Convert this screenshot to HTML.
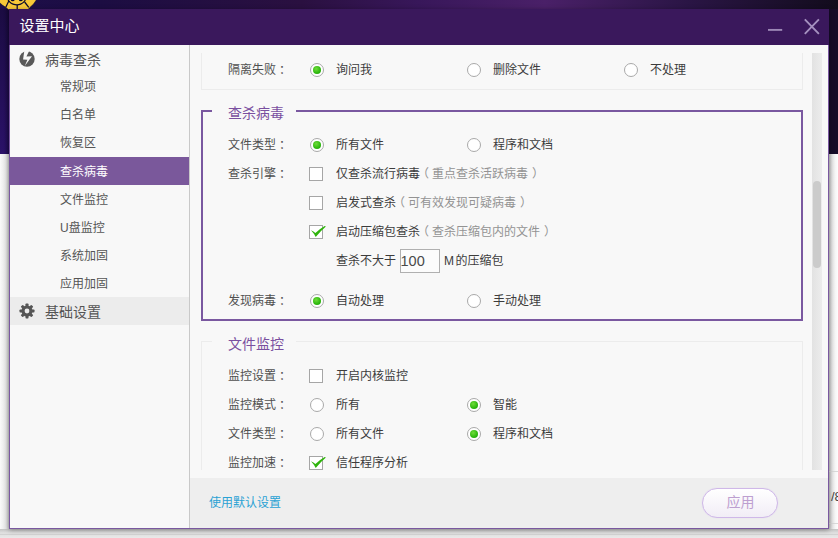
<!DOCTYPE html>
<html lang="zh-CN">
<head>
<meta charset="utf-8">
<title>设置中心</title>
<style>
html,body{margin:0;padding:0;}
body{width:838px;height:538px;overflow:hidden;position:relative;background:#fff;
  font-family:"Liberation Sans","Noto Sans CJK SC",sans-serif;font-size:12px;color:#333;}
.abs{position:absolute;}
#bgtop{left:0;top:0;width:838px;height:10px;
  background:linear-gradient(90deg,#1d0e4a 0%,#1c0d42 12%,#2a1040 36%,#38175a 50%,#4a2068 65%,#2a1545 82%,#120c1c 100%);}
#bgl{left:0;top:9px;width:10px;height:145px;background:linear-gradient(90deg,rgba(0,0,0,0) 40%,rgba(8,0,30,.45) 100%),linear-gradient(180deg,#1b0c42 0%,#2b1268 100%);}
#bgr{left:828px;top:9px;width:10px;height:145px;background:#160c28;}
#bgleft{left:0;top:154px;width:10px;height:384px;background:linear-gradient(90deg,#fafafa 0%,#e4e4e4 60%,#bdbdbd 100%);}
#bgright{left:829px;top:154px;width:9px;height:384px;background:linear-gradient(90deg,#c4c4c4 0%,#e3e3e3 35%,#f6f6f6 70%,#fdfdfd 100%);}
#bgbottom{left:0;top:529px;width:838px;height:9px;background:linear-gradient(180deg,#c4c4c4 0%,#dedede 40%,#e9e9e9 100%);}
#bgbottom i{position:absolute;left:0;top:5px;width:838px;height:1px;background:#d2d2d2;}
#logo{left:0;top:0;}
#win{left:9px;top:9px;width:820px;height:520px;box-sizing:border-box;background:#f8f8f8;
  border:1px solid #7a58a0;border-top:none;box-shadow:0 1px 5px rgba(0,0,0,.35);}
#title{left:9px;top:9px;width:820px;height:36px;background:#3a185c;}
#title span{position:absolute;left:10.5px;top:0;line-height:34px;font-size:15px;color:#fff;}
#side{left:10px;top:45px;width:179px;height:483px;background:#f8f8f8;border-right:1px solid #c9c9c9;}
.s1{position:absolute;left:35px;font-size:14px;line-height:28px;height:28px;color:#555;}
.s2{position:absolute;left:0;width:179px;height:28px;line-height:30px;box-sizing:border-box;padding-left:50px;font-size:12px;color:#555;}
.s2.sel{background:#7a589b;color:#fff;}
#footer{left:190px;top:478px;width:638px;height:50px;background:#eeeeee;}
#footer a{position:absolute;left:19px;top:0;line-height:51px;color:#2aa2d4;text-decoration:none;}
#apply{left:702px;top:488px;width:76px;height:30px;box-sizing:border-box;border:1px solid #cfb8e8;border-radius:15px;box-shadow:0 0 1px #d9c8ee;
  background:linear-gradient(180deg,#ffffff 0%,#f1edf6 100%);color:#bd9fd0;font-size:14px;text-align:center;line-height:27px;text-indent:1px;}
#view{left:190px;top:53px;width:638px;height:417px;overflow:hidden;}
#inner{position:absolute;left:0;top:-8px;width:638px;height:600px;}
.fs{position:absolute;box-sizing:border-box;}
.fs.light{border:1px solid #ececec;}
.fs.purple{border:2px solid #7a58a0;}
.lg{position:absolute;background:#f8f8f8;color:#7a4fa0;font-size:14px;line-height:20px;padding:0 12px 0 16px;}
.lb{position:absolute;left:38px;line-height:20px;height:20px;white-space:nowrap;color:#505050;}
.lb i{font-style:normal;position:relative;left:3px;}
.tx{position:absolute;line-height:20px;height:20px;white-space:nowrap;color:#3c3c3c;}
.tx em{font-style:normal;color:#939393;}
.tx em b{font-weight:normal;position:relative;}
.tx em b.pl{left:-3px;}
.tx em b.pr{left:4px;}
.rd{position:absolute;width:14px;height:14px;box-sizing:border-box;border:1px solid #a9a9a9;border-radius:50%;background:#fff;}
.rd.on::after{content:"";position:absolute;left:2px;top:2px;width:8px;height:8px;border-radius:50%;
  background:radial-gradient(circle at 40% 35%,#6fdc3a 0%,#2db80e 60%,#1f9a08 100%);}
.cb{position:absolute;width:14px;height:14px;box-sizing:border-box;border:1px solid #a6a6a6;background:#fff;}
.ck{position:absolute;overflow:visible;}
#track{left:812px;top:53px;width:10px;height:417px;background:linear-gradient(90deg,#e2e2e2,#ececec);}
#thumb{left:813px;top:181px;width:8px;height:87px;border-radius:4px;background:#cbcbcb;}
</style>
</head>
<body>
<div id="bgtop" class="abs"></div>
<div id="bgl" class="abs"></div>
<div id="bgr" class="abs"></div>
<div id="bgleft" class="abs"></div>
<div id="bgright" class="abs">
  <i class="abs" style="left:0;top:317px;width:9px;height:1px;background:#d8d8d8"></i>
  <i class="abs" style="left:0;top:369px;width:9px;height:1px;background:#d8d8d8"></i>
  <span class="abs" style="left:2px;top:335px;font-size:13px;color:#444;white-space:nowrap;">/8</span>
</div>
<div id="bgbottom" class="abs"><i></i></div>
<svg id="logo" class="abs" width="40" height="10" viewBox="0 0 40 10">
  <path d="M-1 -1 L36.8 -1 L36.3 0 Q34 4.4 29.6 7.7 L28 9.6 L8.4 9.6 L5.7 7.3 Q2.4 5.6 -1 2 Z" fill="#f7c838" stroke="#0b0a2a" stroke-width="0.5"/>
  <g fill="none" stroke="#0b0a2a" stroke-width="1.25">
    <path d="M8.9 0.8 L5.8 7.2"/>
    <path d="M8.1 0 Q8.8 1.2 9.6 1.8 Q11 3.4 13 4.1 Q17.2 5.6 20.6 4.1 Q22.6 3.3 23.9 1.9 Q24.7 1.1 25.3 0"/>
    <path d="M17.2 4.9 L17.2 9.6"/>
    <path d="M24.6 2 L28.8 7.4"/>
  </g>
  <ellipse cx="12.7" cy="0.3" rx="1.8" ry="1" fill="#0b0a2a"/>
  <ellipse cx="20.8" cy="0.2" rx="1.8" ry="1" fill="#0b0a2a"/>
</svg>

<div id="win" class="abs"></div>
<div id="title" class="abs"><span>设置中心</span>
  <svg class="abs" style="left:0;top:0" width="820" height="36" viewBox="0 0 820 36">
    <line x1="759" y1="20.9" x2="773.2" y2="20.9" stroke="#9c88b6" stroke-width="1.9"/>
    <path d="M795.8 10.3 L809.9 24.8 M809.9 10.3 L795.8 24.8" stroke="#a591bf" stroke-width="1.9" fill="none"/>
  </svg>
</div>

<div id="side" class="abs">
  <svg class="abs" style="left:9.2px;top:5.9px" width="16" height="16" viewBox="0 0 16 16">
    <circle cx="8" cy="8" r="7.7" fill="#595959"/>
    <path d="M5.3 0 L10.1 0 L7.45 5.6 L13 5.35 L5.75 15.1 L8.4 8.65 L4.05 8.5 Z" fill="#f8f8f8"/>
  </svg>
  <div class="s1" style="top:1px">病毒查杀</div>
  <div class="s2" style="top:27px">常规项</div>
  <div class="s2" style="top:55px">白名单</div>
  <div class="s2" style="top:83px">恢复区</div>
  <div class="s2 sel" style="top:112px">查杀病毒</div>
  <div class="s2" style="top:140px">文件监控</div>
  <div class="s2" style="top:168px">U盘监控</div>
  <div class="s2" style="top:196px">系统加固</div>
  <div class="s2" style="top:224px">应用加固</div>
  <div class="abs" style="left:0;top:252px;width:179px;height:28px;background:#ececec"></div>
  <svg class="abs" style="left:9px;top:257.9px" width="16" height="16" viewBox="0 0 16 16">
    <g fill="#555">
      <circle cx="8" cy="8" r="5.5"/>
      <g id="t"><rect x="6.5" y="0.5" width="3" height="15" rx="0.7"/></g>
      <rect x="6.5" y="0.5" width="3" height="15" rx="0.7" transform="rotate(45 8 8)"/>
      <rect x="6.5" y="0.5" width="3" height="15" rx="0.7" transform="rotate(90 8 8)"/>
      <rect x="6.5" y="0.5" width="3" height="15" rx="0.7" transform="rotate(135 8 8)"/>
    </g>
    <circle cx="8" cy="8" r="2.4" fill="#ececec"/>
  </svg>
  <div class="s1" style="top:253px">基础设置</div>
</div>

<div id="view" class="abs">
  <div id="inner"><!-- coordinates inside inner: x = pageX-190, y = pageY-45 -->
  <div class="fs light" style="left:11px;top:-40px;width:602px;height:85px"></div>
  <div class="lb" style="top:15px">隔离失败<i>：</i></div>
  <div class="rd on" style="left:120px;top:18px"></div><div class="tx" style="left:146px;top:15px">询问我</div>
  <div class="rd" style="left:277px;top:18px"></div><div class="tx" style="left:303px;top:15px">删除文件</div>
  <div class="rd" style="left:434px;top:18px"></div><div class="tx" style="left:460px;top:15px">不处理</div>

  <div class="fs purple" style="left:11px;top:65px;width:602px;height:211px"></div>
  <div class="lg" style="left:22px;top:58px">查杀病毒</div>
  <div class="lb" style="top:90px">文件类型<i>：</i></div>
  <div class="rd on" style="left:120px;top:93px"></div><div class="tx" style="left:146px;top:90px">所有文件</div>
  <div class="rd" style="left:277px;top:93px"></div><div class="tx" style="left:303px;top:90px">程序和文档</div>
  <div class="lb" style="top:119px">查杀引擎<i>：</i></div>
  <div class="cb" style="left:119px;top:122px"></div><div class="tx" style="left:146px;top:119px">仅查杀流行病毒<em><b class="pl">（</b>重点查杀活跃病毒<b class="pr">）</b></em></div>
  <div class="cb" style="left:119px;top:151px"></div><div class="tx" style="left:146px;top:148px">启发式查杀<em><b class="pl">（</b>可有效发现可疑病毒<b class="pr">）</b></em></div>
  <div class="cb" style="left:119px;top:180px"></div>
  <svg class="ck" style="left:119px;top:176px" width="20" height="20" viewBox="0 0 20 20"><path d="M2 9.2 Q4.6 10.2 6.4 11.9 Q10.6 7.8 15.7 4.9 L16.9 5.5 Q11.4 10.2 6.7 16 Q5 12.4 2 9.2 Z" fill="#2fb40c"/></svg>
  <div class="tx" style="left:146px;top:177px">启动压缩包查杀<em><b class="pl">（</b>查杀压缩包内的文件<b class="pr">）</b></em></div>
  <div class="tx" style="left:146px;top:206px">查杀不大于</div>
  <div class="abs" style="left:210px;top:204px;width:40px;height:24px;box-sizing:border-box;border:1px solid #b0b0b0;background:#fcfcfc;font-size:14.5px;line-height:22px;padding-left:0;text-indent:-0.5px;color:#4a4a4a">100</div>
  <div class="tx" style="left:254px;top:206px">M<span style="margin-left:1.5px">的压缩包</span></div>
  <div class="lb" style="top:246px">发现病毒<i>：</i></div>
  <div class="rd on" style="left:120px;top:249px"></div><div class="tx" style="left:146px;top:246px">自动处理</div>
  <div class="rd" style="left:277px;top:249px"></div><div class="tx" style="left:303px;top:246px">手动处理</div>

  <div class="fs light" style="left:11px;top:296px;width:602px;height:220px"></div>
  <div class="lg" style="left:22px;top:289px">文件监控</div>
  <div class="lb" style="top:321px">监控设置<i>：</i></div>
  <div class="cb" style="left:119px;top:324px"></div><div class="tx" style="left:146px;top:321px">开启内核监控</div>
  <div class="lb" style="top:350px">监控模式<i>：</i></div>
  <div class="rd" style="left:120px;top:353px"></div><div class="tx" style="left:146px;top:350px">所有</div>
  <div class="rd on" style="left:277px;top:353px"></div><div class="tx" style="left:303px;top:350px">智能</div>
  <div class="lb" style="top:379px">文件类型<i>：</i></div>
  <div class="rd" style="left:120px;top:382px"></div><div class="tx" style="left:146px;top:379px">所有文件</div>
  <div class="rd on" style="left:277px;top:382px"></div><div class="tx" style="left:303px;top:379px">程序和文档</div>
  <div class="lb" style="top:408px">监控加速<i>：</i></div>
  <div class="cb" style="left:119px;top:411px"></div>
  <svg class="ck" style="left:119px;top:407px" width="20" height="20" viewBox="0 0 20 20"><path d="M2 9.2 Q4.6 10.2 6.4 11.9 Q10.6 7.8 15.7 4.9 L16.9 5.5 Q11.4 10.2 6.7 16 Q5 12.4 2 9.2 Z" fill="#2fb40c"/></svg>
  <div class="tx" style="left:146px;top:408px">信任程序分析</div>
  </div>
</div>

<div id="track" class="abs"></div>
<div id="thumb" class="abs"></div>

<div id="footer" class="abs"><a>使用默认设置</a></div>
<div id="apply" class="abs">应用</div>
</body>
</html>
